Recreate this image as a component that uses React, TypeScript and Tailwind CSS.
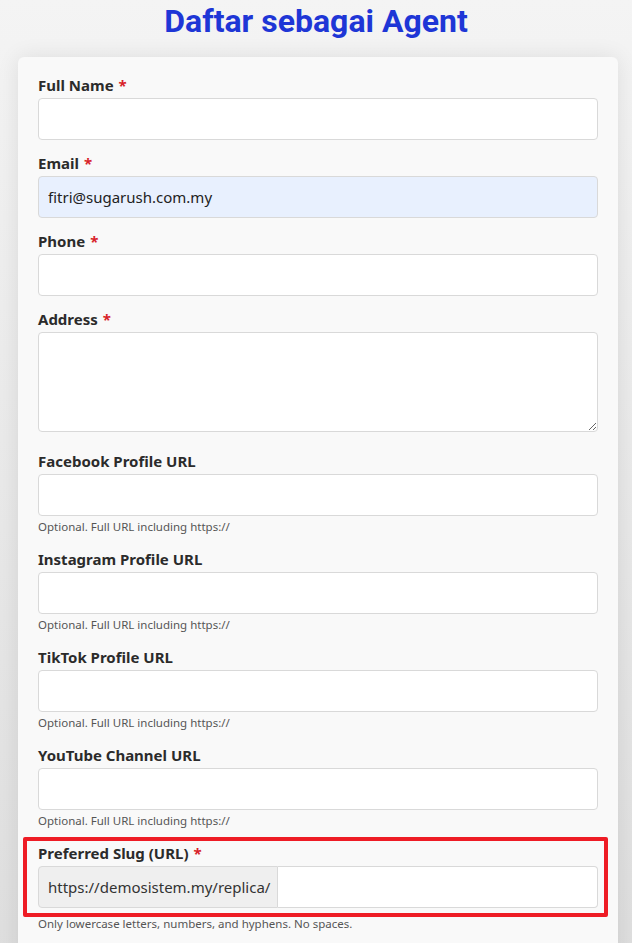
import React from 'react';

type Field = {
  label: string;
  required?: boolean;
  value?: string;
  help?: string;
  multiline?: boolean;
  autofill?: boolean;
};

const fields: Field[] = [
  { label: 'Full Name', required: true },
  { label: 'Email', required: true, value: 'fitri@sugarush.com.my', autofill: true },
  { label: 'Phone', required: true },
  { label: 'Address', required: true, multiline: true },
  { label: 'Facebook Profile URL', help: 'Optional. Full URL including https://' },
  { label: 'Instagram Profile URL', help: 'Optional. Full URL including https://' },
  { label: 'TikTok Profile URL', help: 'Optional. Full URL including https://' },
  { label: 'YouTube Channel URL', help: 'Optional. Full URL including https://' },
];

const font = { fontFamily: '"Noto Sans", "Open Sans", sans-serif' };

const Label: React.FC<{ text: string; required?: boolean }> = ({ text, required }) => (
  <label className="block text-[15px] leading-[20px] font-bold text-[#2b2b2b] mb-[3px]">
    {text}
    {required && <span className="text-[#d8232a] ml-[5px]">*</span>}
  </label>
);

const FormField: React.FC<{ field: Field; last?: boolean }> = ({ field, last }) => {
  const inputCls =
    'block w-full border border-[#d9d9d9] rounded-[4px] px-[9px] text-[15px] text-[#222] outline-none';
  const spacing = last ? 'mb-[8px]' : field.help ? 'mb-[14px]' : field.multiline ? 'mb-[19px]' : 'mb-[13px]';
  return (
    <div className={spacing}>
      <Label text={field.label} required={field.required} />
      {field.multiline ? (
        <textarea className={`${inputCls} h-[100px] bg-white py-2`} />
      ) : (
        <input
          className={`${inputCls} h-[42px] ${field.autofill ? 'bg-[#e8f0fe]' : 'bg-white'}`}
          defaultValue={field.value}
        />
      )}
      {field.help && (
        <p className="mt-[3px] text-[11.5px] leading-[16px] text-[#555]">{field.help}</p>
      )}
    </div>
  );
};

export default function App() {
  return (
    <div className="min-h-screen bg-gradient-to-b from-[#f4f4f4] to-[#dedede]" style={font}>
      <h1
        className="text-center text-[32px] leading-[36px] font-bold text-[#1e36d6] pt-[3px] pb-[18px]"
        style={{ fontFamily: 'Roboto, "Noto Sans", sans-serif' }}
      >
        Daftar sebagai Agent
      </h1>
      <div className="ml-[18px] w-[600px] bg-[#f9f9f9] rounded-[6px] shadow-[0_0_22px_rgba(0,0,0,0.09)] px-[20px] pt-[18px] pb-[40px]">
        {fields.map((f, i) => (
          <FormField key={f.label} field={f} last={i === fields.length - 1} />
        ))}
        <div className="-ml-[15px] -mr-[10px] border-[4px] border-[#ee1c25] rounded-[2px] pl-[11px] pr-[6px] pt-[2px] pb-[5px]">
          <Label text="Preferred Slug (URL)" required />
          <div className="flex h-[42px]">
            <span className="flex items-center w-[240px] shrink-0 whitespace-nowrap bg-[#efefef] border border-[#d9d9d9] rounded-l-[4px] px-[9px] text-[15px] text-[#333]">
              https://demosistem.my/replica/
            </span>
            <input className="flex-1 min-w-0 bg-white border border-l-0 border-[#d9d9d9] rounded-r-[4px] px-[9px] text-[15px] outline-none" />
          </div>
        </div>
        <p className="-mt-[1px] text-[11.5px] leading-[16px] text-[#555]">
          Only lowercase letters, numbers, and hyphens. No spaces.
        </p>
      </div>
    </div>
  );
}
